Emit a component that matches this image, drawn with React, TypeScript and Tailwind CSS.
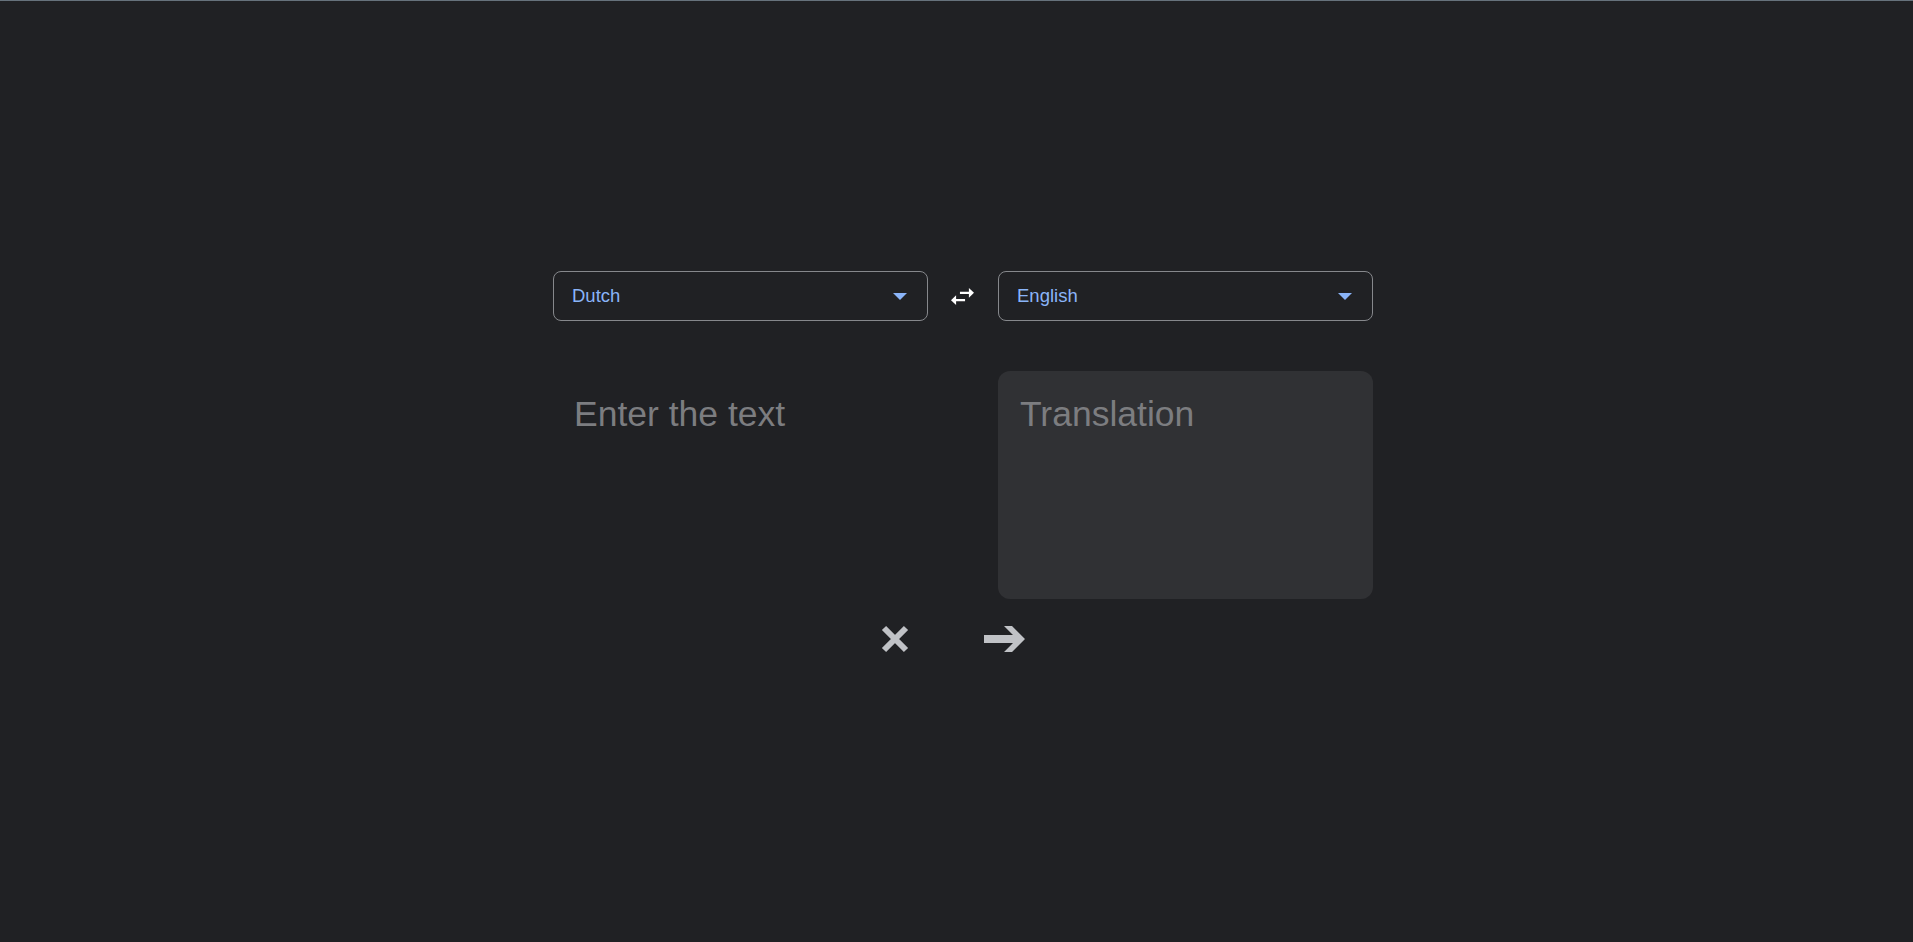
import React from "react";

function Caret() {
  return (
    <svg width="14" height="7" viewBox="0 0 14 7" className="shrink-0">
      <polygon points="0,0 14,0 7,7" fill="#8ab4f8" />
    </svg>
  );
}

function Select({ label }: { label: string }) {
  return (
    <div className="flex h-[50px] w-[375px] items-center justify-between rounded-[8px] border border-[#86888c] pl-[18px] pr-[20px]">
      <span className="text-[18.5px] text-[#8ab4f8]">{label}</span>
      <Caret />
    </div>
  );
}

export default function App() {
  return (
    <div
      className="min-h-[942px] w-full border-t border-[#66727c] bg-[#202124]"
      style={{ fontFamily: '"Liberation Sans", Arial, sans-serif' }}
    >
      <div className="flex justify-center pl-[13px] pt-[270px]">
        <div className="flex w-[820px] flex-col">
          <div className="flex items-center justify-between">
            <Select label="Dutch" />
            <button className="mr-[2px] flex h-[30px] w-[30px] items-center justify-center">
              <svg width="23" height="17" viewBox="3 5 18 14" preserveAspectRatio="none">
                <path
                  d="M6.99 11L3 15l3.99 4v-3H14v-2H6.99v-3zM21 9l-3.99-4v3H10v2h7.01v3L21 9z"
                  fill="#ffffff"
                />
              </svg>
            </button>
            <Select label="English" />
          </div>
          <div className="mt-[50px] flex justify-between">
            <textarea
              placeholder="Enter the text"
              className="h-[228px] w-[375px] resize-none rounded-[12px] bg-transparent pb-[23px] pl-[21px] pr-[22px] pt-[23px] text-[35.5px] leading-[normal] text-[#e8eaed] outline-none placeholder:text-[#7c7d80]"
            />
            <div className="h-[228px] w-[375px] rounded-[12px] bg-[#303134] pl-[22px] pr-[22px] pt-[23px] text-[35.5px] leading-[normal] text-[#7c7d80]">
              Translation
            </div>
          </div>
          <div className="mt-[26px] flex items-center pl-[328px]">
            <button className="flex items-center">
              <svg width="28" height="28" viewBox="0 0 28 28">
                <path d="M3 3 L25 25 M25 3 L3 25" stroke="#c0c2c6" strokeWidth="6" strokeLinecap="butt" />
              </svg>
            </button>
            <button className="ml-[75px] flex items-center">
              <svg width="42" height="26" viewBox="0 0 42 26">
                <polygon
                  points="0,9 29,9 20,0 28,0 41,13 28,26 20,26 29,17 0,17"
                  fill="#c0c2c6"
                />
              </svg>
            </button>
          </div>
        </div>
      </div>
    </div>
  );
}
